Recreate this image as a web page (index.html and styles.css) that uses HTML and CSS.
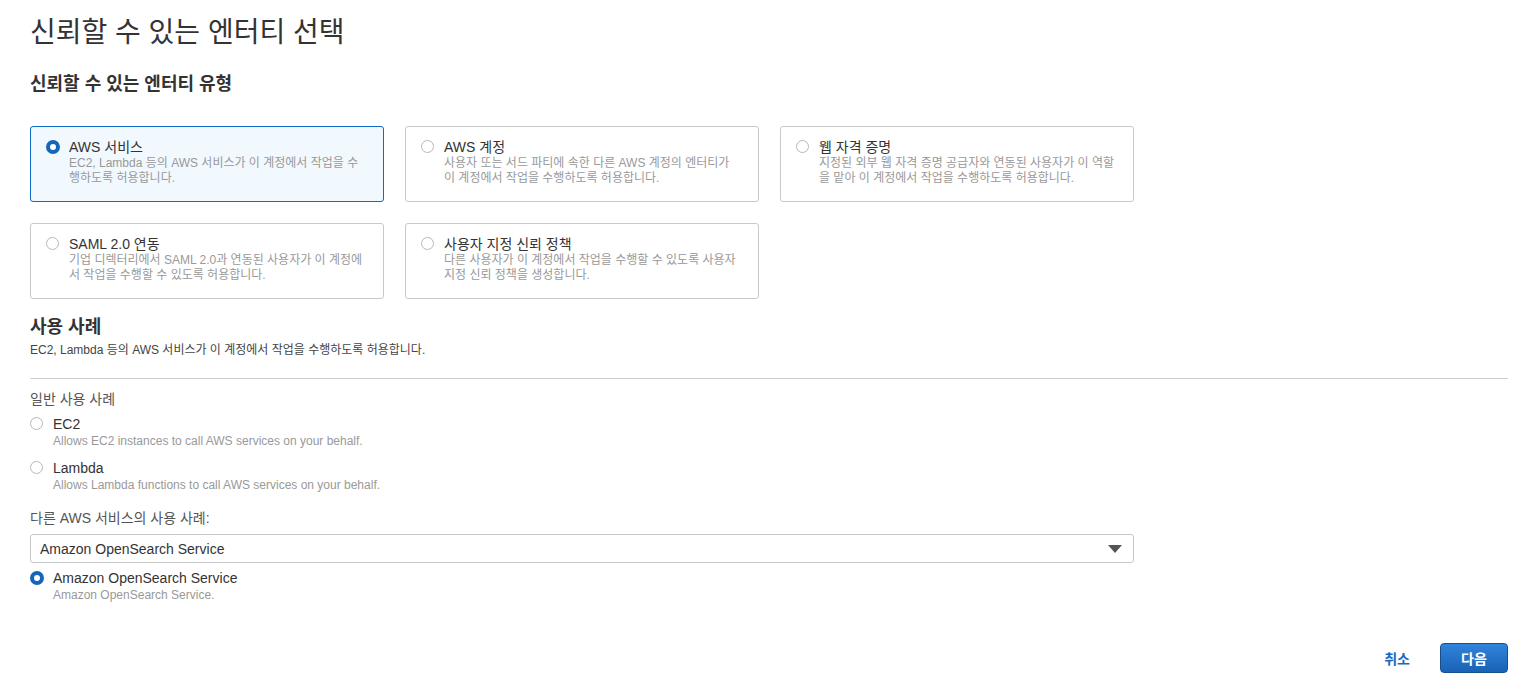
FILE: index.html
```html
<!DOCTYPE html>
<html lang="ko">
<head>
<meta charset="utf-8">
<title>신뢰할 수 있는 엔터티 선택</title>
<link rel="stylesheet" href="styles.css">
</head>
<body>
<div class="page">
  <h1 class="title">신뢰할 수 있는 엔터티 선택</h1>
  <h2 class="subtitle">신뢰할 수 있는 엔터티 유형</h2>

  <div class="tiles">
    <div class="tile selected">
      <span class="radio on"></span>
      <div class="tile-text">
        <div class="tile-title">AWS 서비스</div>
        <div class="tile-desc">EC2, Lambda 등의 AWS 서비스가 이 계정에서 작업을 수행하도록 허용합니다.</div>
      </div>
    </div>
    <div class="tile">
      <span class="radio"></span>
      <div class="tile-text">
        <div class="tile-title">AWS 계정</div>
        <div class="tile-desc">사용자 또는 서드 파티에 속한 다른 AWS 계정의 엔터티가 이 계정에서 작업을 수행하도록 허용합니다.</div>
      </div>
    </div>
    <div class="tile">
      <span class="radio"></span>
      <div class="tile-text">
        <div class="tile-title">웹 자격 증명</div>
        <div class="tile-desc">지정된 외부 웹 자격 증명 공급자와 연동된 사용자가 이 역할을 맡아 이 계정에서 작업을 수행하도록 허용합니다.</div>
      </div>
    </div>
    <div class="tile">
      <span class="radio"></span>
      <div class="tile-text">
        <div class="tile-title">SAML 2.0 연동</div>
        <div class="tile-desc">기업 디렉터리에서 SAML 2.0과 연동된 사용자가 이 계정에서 작업을 수행할 수 있도록 허용합니다.</div>
      </div>
    </div>
    <div class="tile">
      <span class="radio"></span>
      <div class="tile-text">
        <div class="tile-title">사용자 지정 신뢰 정책</div>
        <div class="tile-desc">다른 사용자가 이 계정에서 작업을 수행할 수 있도록 사용자 지정 신뢰 정책을 생성합니다.</div>
      </div>
    </div>
  </div>

  <h2 class="section-title">사용 사례</h2>
  <div class="section-desc">EC2, Lambda 등의 AWS 서비스가 이 계정에서 작업을 수행하도록 허용합니다.</div>
  <div class="divider"></div>

  <div class="group-label">일반 사용 사례</div>
  <div class="option first">
    <span class="radio"></span>
    <div>
      <div class="opt-title">EC2</div>
      <div class="opt-desc">Allows EC2 instances to call AWS services on your behalf.</div>
    </div>
  </div>
  <div class="option">
    <span class="radio"></span>
    <div>
      <div class="opt-title">Lambda</div>
      <div class="opt-desc">Allows Lambda functions to call AWS services on your behalf.</div>
    </div>
  </div>

  <div class="group-label other">다른 AWS 서비스의 사용 사례:</div>
  <div class="select">
    <span>Amazon OpenSearch Service</span>
    <svg class="caret" width="14" height="8" viewBox="0 0 14 8"><path d="M0 0H14L7 8Z" fill="#545454"/></svg>
  </div>
  <div class="option first">
    <span class="radio on"></span>
    <div>
      <div class="opt-title">Amazon OpenSearch Service</div>
      <div class="opt-desc">Amazon OpenSearch Service.</div>
    </div>
  </div>

  <div class="actions">
    <button class="link-btn">취소</button>
    <button class="primary-btn">다음</button>
  </div>
</div>
</body>
</html>
```

FILE: styles.css
```css
* { box-sizing: border-box; }
html, body { margin: 0; padding: 0; background: #fff; }
body {
  font-family: "Liberation Sans", Arial, "Noto Sans CJK KR", sans-serif;
  color: #333;
}
.page { padding: 16px 25px 0 30px; }

.title {
  margin: 0;
  font-size: 28px;
  line-height: 34px;
  font-weight: normal;
  color: #333;
}
.subtitle {
  margin: 23px 0 0;
  font-size: 18px;
  line-height: 22px;
  font-weight: bold;
  color: #333;
}

.tiles {
  margin-top: 31px;
  display: grid;
  grid-template-columns: repeat(3, 354px);
  grid-auto-rows: 76px;
  gap: 21px;
}
.tile {
  display: flex;
  align-items: flex-start;
  gap: 10px;
  padding: 11px 16px 0 15px;
  border: 1px solid #c9c9c9;
  border-radius: 3px;
  background: #fff;
}
.tile.selected {
  border-color: #0f6cc4;
  background: #f1f8fe;
}
.tile-text { flex: 1; }
.tile-title { font-size: 14px; line-height: 18px; color: #333; }
.tile-desc { font-size: 12px; line-height: 15px; color: #999; }

.radio {
  flex: none;
  width: 13px;
  height: 13px;
  margin-top: 2px;
  border: 1px solid #b8b8b8;
  border-radius: 50%;
  background: #fff;
}
.radio.on {
  width: 14px;
  height: 14px;
  margin-right: -1px;
  border: 4px solid #1467b8;
}

.section-title {
  margin: 17px 0 0;
  font-size: 18px;
  line-height: 22px;
  font-weight: bold;
  color: #333;
}
.section-desc { margin-top: 4px; font-size: 12px; line-height: 16px; color: #444; }
.divider { margin-top: 20px; height: 1px; background: #cfcfcf; }

.group-label { margin-top: 10px; font-size: 14px; line-height: 20px; color: #555; }
.group-label.other { margin-top: 15px; }

.option { display: flex; align-items: flex-start; gap: 10px; margin-top: 10px; }
.option.first { margin-top: 6px; }
.option .radio { margin-top: 2px; }
.opt-title { font-size: 14px; line-height: 18px; color: #333; }
.opt-desc { font-size: 12px; line-height: 16px; color: #999; }

.select {
  margin-top: 6px;
  width: 1104px;
  height: 29px;
  border: 1px solid #c6c6c6;
  border-radius: 3px;
  display: flex;
  align-items: center;
  justify-content: space-between;
  padding: 0 11px 0 9px;
  font-size: 14px;
  color: #333;
}

.actions {
  margin-top: 40px;
  display: flex;
  justify-content: flex-end;
  align-items: center;
  gap: 30px;
}
.link-btn {
  border: none;
  background: none;
  padding: 0;
  font-family: inherit;
  font-size: 14px;
  font-weight: bold;
  color: #1a6ac3;
}
.primary-btn {
  width: 68px;
  height: 30px;
  border: 1px solid #174f8c;
  border-radius: 4px;
  background: linear-gradient(#2f84dc, #1a62b5);
  color: #fff;
  font-family: inherit;
  font-size: 14px;
  font-weight: bold;
}
```
